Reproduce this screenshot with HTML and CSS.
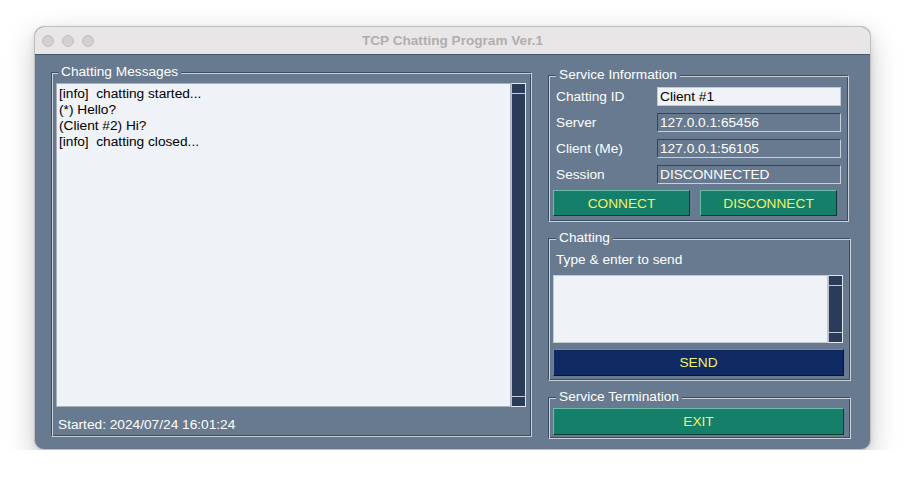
FILE: index.html
```html
<!DOCTYPE html>
<html lang="en">
<head>
<meta charset="utf-8">
<title>TCP Chatting Program Ver.1</title>
<link rel="stylesheet" href="styles.css">
</head>
<body>
<div class="window">
  <div class="titlebar">
    <div class="lights"><span></span><span></span><span></span></div>
    <div class="title">TCP Chatting Program Ver.1</div>
    <div></div>
  </div>
  <div class="content">
    <fieldset class="group messages">
      <legend>Chatting Messages</legend>
      <div class="textbox big">
        <div class="text">
          <div>[info]&nbsp; chatting started...</div>
          <div>(*) Hello?</div>
          <div>(Client #2) Hi?</div>
          <div>[info]&nbsp; chatting closed...</div>
        </div>
        <div class="scroll"><span class="arrow top"></span><span class="trough"></span><span class="arrow bottom"></span></div>
      </div>
      <div class="status">Started: 2024/07/24 16:01:24</div>
    </fieldset>
    <div class="right">
      <fieldset class="group info">
        <legend>Service Information</legend>
        <div class="rows">
          <div class="row"><span class="label">Chatting ID</span><span class="entry light">Client #1</span></div>
          <div class="row"><span class="label">Server</span><span class="entry">127.0.0.1:65456</span></div>
          <div class="row"><span class="label">Client (Me)</span><span class="entry">127.0.0.1:56105</span></div>
          <div class="row"><span class="label">Session</span><span class="entry">DISCONNECTED</span></div>
        </div>
        <div class="buttons">
          <button class="btn teal">CONNECT</button>
          <button class="btn teal">DISCONNECT</button>
        </div>
      </fieldset>
      <fieldset class="group chat">
        <legend>Chatting</legend>
        <div class="hint">Type &amp; enter to send</div>
        <div class="textbox small">
          <div class="text"></div>
          <div class="scroll"><span class="arrow top"></span><span class="trough"></span><span class="arrow bottom"></span></div>
        </div>
        <button class="btn navy wide">SEND</button>
      </fieldset>
      <fieldset class="group term">
        <legend>Service Termination</legend>
        <button class="btn teal wide">EXIT</button>
      </fieldset>
    </div>
  </div>
</div>
</body>
</html>
```

FILE: styles.css
```css
* { box-sizing: border-box; }
html, body { margin: 0; padding: 0; background: #ffffff; }
body {
  font-family: "Liberation Sans", Arial, Helvetica, sans-serif;
  font-size: 13.7px;
  line-height: 16px;
  padding: 26px 0 0 34px;
}
.window {
  width: 837px;
  height: 424px;
  border: 1px solid #bfbfc2;
  border-radius: 10px;
  overflow: hidden;
  background: #687a8f;
  box-shadow: 0 10px 28px rgba(0,0,0,0.22), 0 2px 6px rgba(0,0,0,0.08);
  display: flex;
  flex-direction: column;
}
.titlebar {
  flex-shrink: 0;
  height: 28px;
  background: #e8e6e7;
  border-bottom: 1px solid #46556a;
  display: grid;
  grid-template-columns: 1fr auto 1fr;
  align-items: center;
}
.lights { display: flex; gap: 8px; padding-left: 7px; }
.lights span {
  width: 12px; height: 12px; border-radius: 50%;
  background: #d2d0d1; border: 1px solid #c2c0c1;
}
.title {
  font-weight: bold;
  color: #b0aeaf;
  font-size: 13.6px;
}
.content {
  flex: 1;
  min-height: 0;
  display: flex;
  align-items: flex-start;
  gap: 17px;
  padding: 9px 19px 0 16px;
  color: #ffffff;
}
.group {
  margin: 0;
  min-width: 0;
  border: 1px solid;
  border-color: #3d4c5f #c9d1db #c9d1db #3d4c5f;
  box-shadow: inset 1px 1px 0 #c9d1db, inset -1px -1px 0 #3d4c5f;
  padding: 0;
}
.group legend {
  padding: 0 3px;
  margin-left: 3px;
  background: #687a8f;
  color: #ffffff;
  line-height: 16px;
}
.messages {
  width: 481px;
  height: 373px;
  flex-shrink: 0;
  padding: 3px 5px 0 3px;
  display: flex;
  flex-direction: column;
}
.textbox { display: flex; }
.textbox.big { height: 324px; margin-left: 1px; }
.textbox .text {
  flex: 1;
  background: #eff2f7;
  border: 1px solid #a9b1bb;
  color: #000000;
  padding: 2px 2px 1px;
  line-height: 16px;
}
.scroll {
  width: 15px;
  background: #2b3c5b;
  border: 1px solid #e3e7ee;
  border-left-color: #b9c0ca;
  display: flex;
  flex-direction: column;
}
.scroll .arrow { height: 10px; }
.scroll .arrow.top { border-bottom: 1px solid #c3cad6; }
.scroll .arrow.bottom { border-top: 1px solid #c3cad6; }
.scroll .trough { flex: 1; }
.status {
  margin-top: 10px;
  padding-left: 3px;
}
.right {
  width: 303px;
  flex-shrink: 0;
  margin-left: -1px;
  padding-top: 3px;
  display: flex;
  flex-direction: column;
  gap: 8px;
}
.info {
  width: 301px;
  padding: 4px 5px 5px 4px;
}
.rows { display: flex; flex-direction: column; gap: 7px; }
.row { display: flex; align-items: center; height: 19px; }
.label { width: 104px; padding-left: 3px; }
.entry {
  width: 184px;
  height: 19px;
  padding: 1px 2px 0;
  border: 1px solid;
  border-color: #34445a #c7cfd9 #c7cfd9 #34445a;
  color: #ffffff;
  line-height: 16px;
}
.entry.light {
  background: #eff2f7;
  border-color: #c4cad3;
  color: #000000;
}
.buttons {
  display: flex;
  gap: 10px;
  margin-top: 6px;
}
.btn {
  font-family: "Liberation Sans", Arial, Helvetica, sans-serif;
  font-size: 13.7px;
  color: #f2f26a;
  height: 26px;
  padding: 0;
  border: 1px solid;
  cursor: pointer;
}
.btn.teal {
  background: #167f6a;
  border-color: #6cbcaa #0a3b31 #0a3b31 #6cbcaa;
  width: 137px;
}
.btn.navy {
  background: #0f2a62;
  border-color: #6a82b4 #061636 #061636 #6a82b4;
}
.btn.wide { width: 291px; height: 27px; }
.chat { padding: 6px 5px 4px 4px; }
.hint { padding-left: 3px; }
.textbox.small { height: 68px; margin-top: 7px; width: 290px; }
.textbox.small .text { border-color: #c4cad3; }
.chat .btn { margin-top: 6px; }
.term { padding: 3px 5px 3px 4px; }
```
